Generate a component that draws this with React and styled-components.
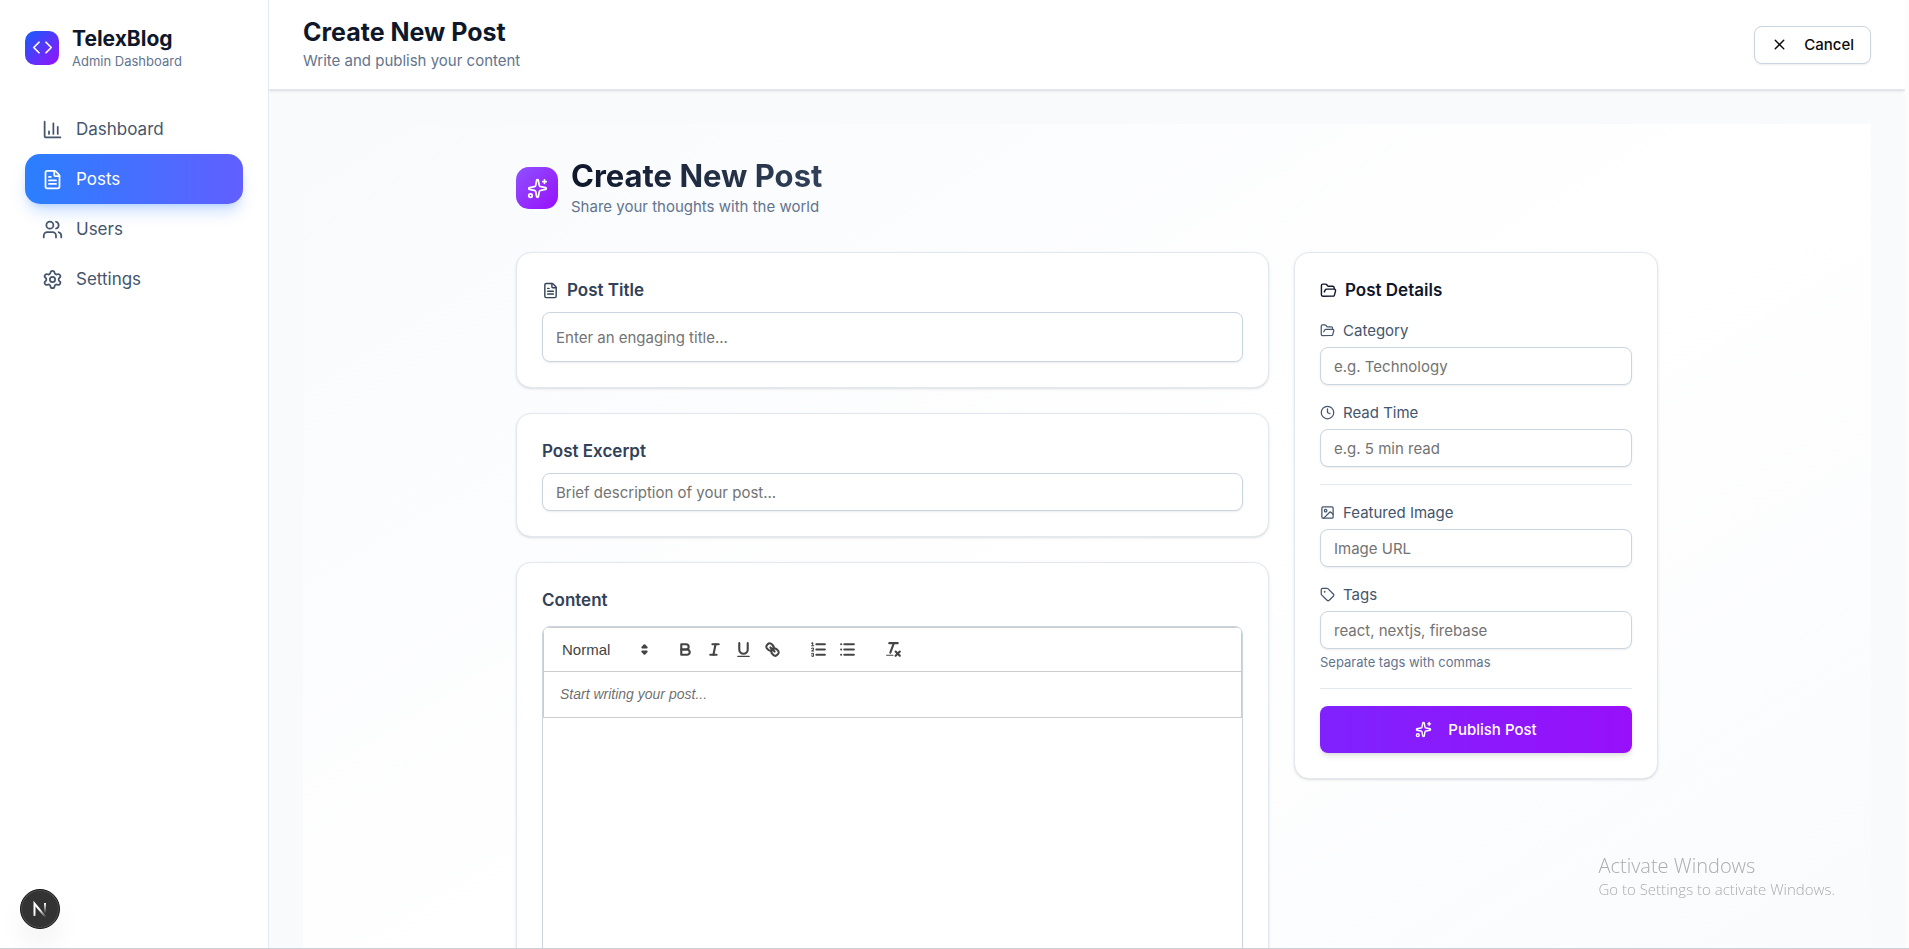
import { useState } from "react";
import styled, { createGlobalStyle, css } from "styled-components";
import {
  ChartColumn,
  Clock,
  Code,
  FileText,
  FolderOpen,
  Image,
  Settings,
  Sparkles,
  Tag,
  Users,
  X,
} from "lucide-react";

const GlobalStyle = createGlobalStyle`
* {
  box-sizing: border-box;
}

body {
  margin: 0;
  font-family: Inter, "Liberation Sans", sans-serif;
  font-size: 15px;
  line-height: 21px;
  color: #0a0a0a;
  background: #fff;
}

h1, h2, h3, p {
  margin: 0;
}

button, input, select, textarea {
  font-family: inherit;
  font-size: inherit;
}
`;

const Shell = styled.div`
  display: flex;
  height: 100vh;
  padding-right: 4px;
  border-bottom: 1px solid #cbd0d5;
  background: #fcfcfd;
`;

const Sidebar = styled.aside`
  flex: none;
  width: 269px;
  padding: 25px;
  border-right: 1px solid #e2e8f0;
  background: #fff;
`;

const Brand = styled.div`
  display: flex;
  align-items: center;
  gap: 13px;
  margin-bottom: 34px;
`;

const BrandLogo = styled.div`
  display: flex;
  align-items: center;
  justify-content: center;
  width: 34px;
  height: 34px;
  border-radius: 10px;
  color: #fff;
  background: linear-gradient(to bottom right, #155dfc, #9810fa);
`;

const BrandName = styled.h2`
  font-size: 21px;
  line-height: 28px;
  font-weight: 700;
  color: #0f172b;
`;

const BrandCaption = styled.p`
  font-size: 13px;
  line-height: 17px;
  color: #62748e;
`;

const Nav = styled.nav`
  display: flex;
  flex-direction: column;
`;

const NavItem = styled.a`
  display: flex;
  align-items: center;
  gap: 13px;
  padding: 12px 17px;
  border-radius: 15px;
  font-size: 17px;
  line-height: 26px;
  color: #45556c;
  text-decoration: none;

  ${(props) =>
    props.$active &&
    css`
      color: #fff;
      background: linear-gradient(to right, #2b7fff, #615fff);
      box-shadow: 0 10px 16px -3px rgba(43, 127, 255, 0.25), 0 4px 6px -4px rgba(43, 127, 255, 0.25);
    `}
`;

const Main = styled.main`
  flex: 1;
  min-width: 0;
  overflow-y: auto;
  scrollbar-width: none;
  background: #f8fafc;
`;

const TopBar = styled.header`
  display: flex;
  align-items: center;
  justify-content: space-between;
  padding: 17px 34px;
  border-bottom: 1px solid #e2e8f0;
  background: #fff;
  box-shadow: 0 1px 3px rgba(0, 0, 0, 0.1), 0 1px 2px -1px rgba(0, 0, 0, 0.1);
`;

const TopTitle = styled.h1`
  margin-bottom: 3px;
  font-size: 25px;
  line-height: 30px;
  font-weight: 700;
  color: #0f172b;
`;

const Muted = styled.p`
  line-height: 22px;
  color: #62748e;
`;

const CancelButton = styled.button`
  display: flex;
  align-items: center;
  gap: 16px;
  height: 38px;
  padding: 0 16px;
  border: 1px solid #cad5e2;
  border-radius: 8px;
  font-weight: 500;
  color: #0a0a0a;
  background: #fff;
  box-shadow: 0 1px 2px rgba(0, 0, 0, 0.08);
`;

const Canvas = styled.section`
  margin: 34px;
  padding: 34px;
  background: linear-gradient(to bottom right, #f8fafc, #fff, #f8fafc);
`;

const Inner = styled.div`
  max-width: 1142px;
  margin: 0 auto;
`;

const PageHeading = styled.div`
  display: flex;
  align-items: center;
  gap: 13px;
  margin-bottom: 34px;
`;

const HeadingIcon = styled.div`
  display: flex;
  align-items: center;
  justify-content: center;
  width: 42px;
  height: 42px;
  border-radius: 13px;
  color: #fff;
  background: linear-gradient(to bottom right, #8e51ff, #9810fa);
`;

const HeadingTitle = styled.h2`
  margin-bottom: 3px;
  font-size: 31px;
  line-height: 35px;
  font-weight: 700;
  color: transparent;
  background: linear-gradient(to right, #0f172b, #314158);
  background-clip: text;
`;

const FormGrid = styled.form`
  display: grid;
  grid-template-columns: repeat(3, 1fr);
  align-items: start;
  gap: 25px;
`;

const MainColumn = styled.div`
  grid-column: span 2;
  display: flex;
  flex-direction: column;
  gap: 25px;
`;

const Card = styled.section`
  padding: 25px;
  border: 1px solid #e2e8f0;
  border-radius: 15px;
  background: #fff;
  box-shadow: 0 1px 3px rgba(0, 0, 0, 0.1), 0 1px 2px -1px rgba(0, 0, 0, 0.1);
`;

const CardLabel = styled.label`
  display: flex;
  align-items: center;
  gap: 8px;
  margin-bottom: ${(props) => (props.$spaced ? "13px" : "9px")};
  font-size: 17px;
  line-height: 25px;
  font-weight: 600;
  color: #314158;
`;

const SideTitle = styled.h3`
  display: flex;
  align-items: center;
  gap: 8px;
  font-size: 17px;
  line-height: 25px;
  font-weight: 600;
  color: #0f172b;
`;

const TextInput = styled.input`
  display: block;
  width: 100%;
  height: ${(props) => (props.$tall ? "50px" : "38px")};
  padding: 0 13px;
  border: 1px solid #cad5e2;
  border-radius: 8px;
  background: #fff;
  box-shadow: 0 1px 2px rgba(0, 0, 0, 0.08);

  &::placeholder {
    color: #737373;
  }
`;

const SideCard = styled(Card)`
  display: flex;
  flex-direction: column;
  gap: 17px;
`;

const FieldLabel = styled.label`
  display: flex;
  align-items: center;
  gap: 8px;
  margin-bottom: 6px;
  color: #45556c;
`;

const Hint = styled.p`
  margin-top: 5px;
  font-size: 13px;
  line-height: 17px;
  color: #62748e;
`;

const Divider = styled.hr`
  width: 100%;
  height: 1px;
  margin: 0;
  border: none;
  background: #e2e8f0;
`;

const PublishButton = styled.button`
  display: flex;
  align-items: center;
  justify-content: center;
  gap: 16px;
  height: 47px;
  border: none;
  border-radius: 8px;
  font-weight: 500;
  color: #fff;
  background: linear-gradient(to right, #7f22fe, #9810fa);
  box-shadow: 0 4px 6px -1px rgba(0, 0, 0, 0.1), 0 2px 4px -2px rgba(0, 0, 0, 0.1);
`;

const Editor = styled.div`
  min-height: 420px;
  border: 1px solid #cad5e2;
  border-radius: 8px;
  overflow: hidden;
  font-family: "Liberation Sans", Arial, sans-serif;
`;

const Toolbar = styled.div`
  display: flex;
  align-items: center;
  gap: 17px;
  height: 45px;
  padding: 0 8px;
  border: 1px solid #ccc;
`;

const Picker = styled.div`
  display: grid;
  align-items: center;
  width: 102px;
  color: #444;

  select, svg {
    grid-area: 1 / 1;
  }

  select {
    appearance: none;
    width: 100%;
    height: 25px;
    padding: 0 10px;
    border: none;
    font-weight: 500;
    color: inherit;
    background: transparent;
  }

  svg {
    justify-self: end;
    pointer-events: none;
  }
`;

const ToolGroup = styled.div`
  display: flex;
`;

const ToolButton = styled.button`
  display: flex;
  align-items: center;
  justify-content: center;
  width: 29px;
  height: 25px;
  padding: 0;
  border: none;
  color: #444;
  background: none;
`;

const EditorText = styled.textarea`
  display: block;
  width: 100%;
  height: 46px;
  padding: 12px 16px;
  border: 1px solid #ccc;
  border-top: none;
  resize: none;
  overflow: hidden;
  font-size: 14px;
  line-height: 20px;

  &::placeholder {
    font-style: italic;
    color: rgba(0, 0, 0, 0.6);
  }
`;

const DevBadge = styled.button`
  position: fixed;
  left: 20px;
  bottom: 20px;
  width: 40px;
  height: 40px;
  padding: 0;
  border: 1px solid #171717;
  border-radius: 50%;
  background: #333;
  box-shadow: inset 0 0 0 1px #505050, 0 16px 32px -8px rgba(0, 0, 0, 0.14);
`;

const Watermark = styled.div`
  position: fixed;
  right: 74px;
  bottom: 50px;
  font-family: "Open Sans", "Noto Sans", sans-serif;
  font-weight: 300;
  color: #acacac;
  pointer-events: none;
`;

const WatermarkTitle = styled.p`
  font-size: 20px;
  line-height: 26px;
`;

const WatermarkText = styled.p`
  font-size: 15px;
  line-height: 20px;
`;

const navItems = [
  { label: "Dashboard", icon: ChartColumn },
  { label: "Posts", icon: FileText, active: true },
  { label: "Users", icon: Users },
  { label: "Settings", icon: Settings },
];

function ToolIcon({ children }) {
  return (
    <svg
      width="19"
      height="19"
      viewBox="0 0 18 18"
      fill="none"
      stroke="currentColor"
      strokeWidth="2"
      strokeLinecap="round"
      strokeLinejoin="round"
    >
      {children}
    </svg>
  );
}

const toolGroups = [
  [
    {
      name: "Bold",
      icon: (
        <>
          <path d="M5,4H9.5A2.5,2.5,0,0,1,12,6.5v0A2.5,2.5,0,0,1,9.5,9H5V4Z" />
          <path d="M5,9h5.5A2.5,2.5,0,0,1,13,11.5v0A2.5,2.5,0,0,1,10.5,14H5V9Z" />
        </>
      ),
    },
    {
      name: "Italic",
      icon: (
        <>
          <line x1="7" x2="13" y1="4" y2="4" />
          <line x1="5" x2="11" y1="14" y2="14" />
          <line x1="8" x2="10" y1="14" y2="4" />
        </>
      ),
    },
    {
      name: "Underline",
      icon: (
        <>
          <path d="M5,3V9a4.012,4.012,0,0,0,4,4H9a4.012,4.012,0,0,0,4-4V3" />
          <rect fill="currentColor" stroke="none" height="1" rx="0.5" width="12" x="3" y="15" />
        </>
      ),
    },
    {
      name: "Link",
      icon: (
        <>
          <line x1="7" x2="11" y1="7" y2="11" />
          <path d="M8.9,4.577a3.476,3.476,0,0,1,.36,4.679A3.476,3.476,0,0,1,4.577,8.9C3.185,7.5,2.035,6.4,4.217,4.217S7.5,3.185,8.9,4.577Z" />
          <path d="M13.423,9.1a3.476,3.476,0,0,0-4.679-.36,3.476,3.476,0,0,0,.36,4.679c1.392,1.392,2.5,2.542,4.679.36S14.815,10.5,13.423,9.1Z" />
        </>
      ),
    },
  ],
  [
    {
      name: "Ordered list",
      icon: (
        <>
          <line x1="7" x2="15" y1="4" y2="4" />
          <line x1="7" x2="15" y1="9" y2="9" />
          <line x1="7" x2="15" y1="14" y2="14" />
          <g strokeWidth="1">
            <path d="M2.5,5.5h2M2.5,3l1-.5v3" />
            <path d="M4.5,10.5h-2c0-.234,1.85-1.076,1.85-2.234A0.959,0.959,0,0,0,2.5,8.156" />
            <path d="M2.5,14.846a0.959,0.959,0,0,0,1.85-.11A0.7,0.7,0,0,0,3.75,14a0.688,0.688,0,0,0,.6-0.736,0.959,0.959,0,0,0-1.85-.109" />
          </g>
        </>
      ),
    },
    {
      name: "Bullet list",
      icon: (
        <>
          <line x1="6" x2="15" y1="4" y2="4" />
          <line x1="6" x2="15" y1="9" y2="9" />
          <line x1="6" x2="15" y1="14" y2="14" />
          <path d="M3,4h0M3,9h0M3,14h0" />
        </>
      ),
    },
  ],
  [
    {
      name: "Clear formatting",
      icon: (
        <>
          <line x1="5" x2="13" y1="3" y2="3" />
          <line x1="6" x2="9.35" y1="12" y2="3" />
          <line x1="11" x2="15" y1="11" y2="15" />
          <line x1="15" x2="11" y1="11" y2="15" />
          <rect fill="currentColor" stroke="none" height="1" rx="0.5" width="7" x="2" y="14" />
        </>
      ),
    },
  ],
];

function ContentEditor() {
  const [content, setContent] = useState("");

  return (
    <Editor>
      <Toolbar>
        <Picker>
          <select aria-label="Text style" defaultValue="normal">
            <option value="normal">Normal</option>
            <option value="h1">Heading 1</option>
            <option value="h2">Heading 2</option>
          </select>
          <ToolIcon>
            <polygon points="7 11 9 13 11 11 7 11" />
            <polygon points="7 7 9 5 11 7 7 7" />
          </ToolIcon>
        </Picker>
        {toolGroups.map((group) => (
          <ToolGroup key={group[0].name}>
            {group.map((tool) => (
              <ToolButton key={tool.name} type="button" aria-label={tool.name}>
                <ToolIcon>{tool.icon}</ToolIcon>
              </ToolButton>
            ))}
          </ToolGroup>
        ))}
      </Toolbar>
      <EditorText
        id="content"
        placeholder="Start writing your post..."
        value={content}
        onChange={(e) => setContent(e.target.value)}
      />
    </Editor>
  );
}

function Field({ id, label, icon: Icon, placeholder, hint }) {
  return (
    <div>
      <FieldLabel htmlFor={id}>
        <Icon size={15} />
        {label}
      </FieldLabel>
      <TextInput id={id} type="text" placeholder={placeholder} />
      {hint && <Hint>{hint}</Hint>}
    </div>
  );
}

function App() {
  return (
    <>
      <GlobalStyle />
      <Shell>
        <Sidebar>
          <Brand>
            <BrandLogo>
              <Code size={21} />
            </BrandLogo>
            <div>
              <BrandName>TelexBlog</BrandName>
              <BrandCaption>Admin Dashboard</BrandCaption>
            </div>
          </Brand>
          <Nav>
            {navItems.map(({ label, icon: Icon, active }) => (
              <NavItem key={label} href="#" $active={active}>
                <Icon size={21} />
                {label}
              </NavItem>
            ))}
          </Nav>
        </Sidebar>

        <Main>
          <TopBar>
            <div>
              <TopTitle>Create New Post</TopTitle>
              <Muted>Write and publish your content</Muted>
            </div>
            <CancelButton type="button">
              <X size={17} />
              Cancel
            </CancelButton>
          </TopBar>

          <Canvas>
            <Inner>
              <PageHeading>
                <HeadingIcon>
                  <Sparkles size={21} />
                </HeadingIcon>
                <div>
                  <HeadingTitle>Create New Post</HeadingTitle>
                  <Muted>Share your thoughts with the world</Muted>
                </div>
              </PageHeading>

              <FormGrid onSubmit={(e) => e.preventDefault()}>
                <MainColumn>
                  <Card>
                    <CardLabel htmlFor="title">
                      <FileText size={17} />
                      Post Title
                    </CardLabel>
                    <TextInput id="title" type="text" $tall placeholder="Enter an engaging title..." />
                  </Card>
                  <Card>
                    <CardLabel htmlFor="excerpt">Post Excerpt</CardLabel>
                    <TextInput id="excerpt" type="text" placeholder="Brief description of your post..." />
                  </Card>
                  <Card>
                    <CardLabel htmlFor="content" $spaced>
                      Content
                    </CardLabel>
                    <ContentEditor />
                  </Card>
                </MainColumn>

                <SideCard>
                  <SideTitle>
                    <FolderOpen size={17} />
                    Post Details
                  </SideTitle>
                  <Field id="category" label="Category" icon={FolderOpen} placeholder="e.g. Technology" />
                  <Field id="readTime" label="Read Time" icon={Clock} placeholder="e.g. 5 min read" />
                  <Divider />
                  <Field id="image" label="Featured Image" icon={Image} placeholder="Image URL" />
                  <Field
                    id="tags"
                    label="Tags"
                    icon={Tag}
                    placeholder="react, nextjs, firebase"
                    hint="Separate tags with commas"
                  />
                  <Divider />
                  <PublishButton type="submit">
                    <Sparkles size={17} />
                    Publish Post
                  </PublishButton>
                </SideCard>
              </FormGrid>
            </Inner>
          </Canvas>
        </Main>
      </Shell>

      <DevBadge type="button" aria-label="Open dev tools">
        <svg width="38" height="38" viewBox="0 0 38 38" fill="none">
          <defs>
            <linearGradient id="stem" x1="0" y1="13" x2="0" y2="23" gradientUnits="userSpaceOnUse">
              <stop stopColor="#fff" />
              <stop offset="1" stopColor="#fff" stopOpacity="0" />
            </linearGradient>
            <linearGradient id="diagonal" x1="19" y1="19" x2="25" y2="27" gradientUnits="userSpaceOnUse">
              <stop stopColor="#fff" />
              <stop offset="1" stopColor="#fff" stopOpacity="0" />
            </linearGradient>
          </defs>
          <path d="M13.5 26V13.5L24.5 27" stroke="url(#diagonal)" strokeWidth="2" />
          <path d="M24 13V23" stroke="url(#stem)" strokeWidth="2" />
        </svg>
      </DevBadge>

      <Watermark>
        <WatermarkTitle>Activate Windows</WatermarkTitle>
        <WatermarkText>Go to Settings to activate Windows.</WatermarkText>
      </Watermark>
    </>
  );
}

export default App;
